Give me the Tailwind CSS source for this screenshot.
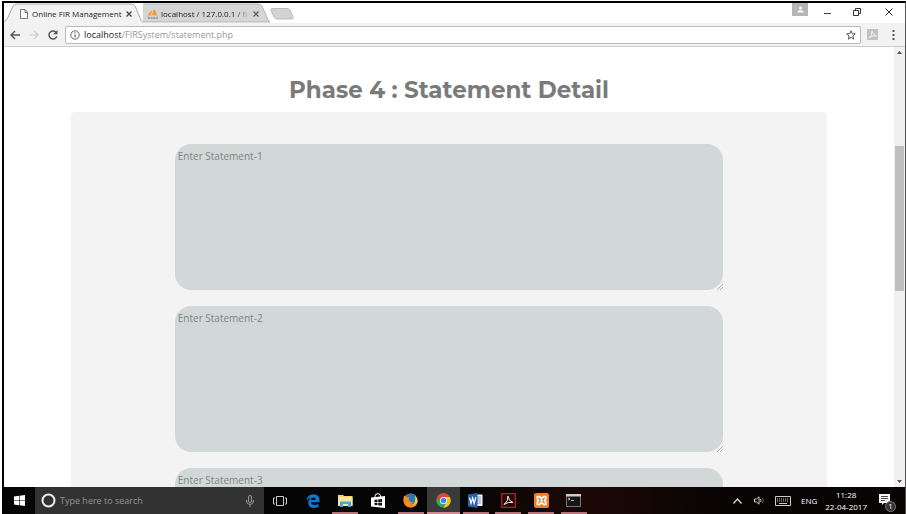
<!DOCTYPE html>
<html lang="en">
<head>
<meta charset="utf-8">
<title>Online FIR Management</title>
<script src="https://cdn.jsdelivr.net/npm/@tailwindcss/browser@4"></script>
</head>
<body class="bg-white font-['Open_Sans','Noto_Sans',sans-serif]">
<div class="flex h-screen flex-col overflow-hidden pl-0.5 pt-px">
<div class="flex min-h-0 flex-1 flex-col border-t-2 border-r border-l-2 border-t-black border-l-black border-r-[#555]">

  <header class="bg-[#f2f2f2]">
    <div class="flex h-5 items-start bg-white">
      <nav class="flex h-5 text-[8px] text-[#222]" aria-label="Tabs">
        <div class="relative flex h-5 w-[139px] items-center pt-0.5 pl-4">
          <svg class="absolute inset-0 h-5 w-[139px]" viewBox="0 0 139 20"><path d="M0 20V17Q3 17 5 12L9 3Q10 1 13 1H127Q130 1 131 3L137 17Q138 20 139 20Z" fill="#f2f2f2"/><path d="M0 19Q3 18 5 12L9 3Q10 1 13 1H127Q130 1 131 3L137 17Q138 19 139 19" fill="none" stroke="#aaa"/></svg>
          <svg class="relative h-[10px] w-2 shrink-0" viewBox="0 0 8 10" fill="#fff" stroke="#777"><path d="M.5.5H5L7.500 3V9.500H.5ZM5 .5V3.500H7.500"/></svg>
          <a href="#" class="relative ml-1 w-[94px] whitespace-nowrap">Online FIR Management</a>
          <button class="relative" aria-label="Close tab"><svg class="h-[6px] w-[6px]" viewBox="0 0 6 6" stroke="#444" stroke-width="1.3"><path d="M.5.5l5 5m0-5l-5 5"/></svg></button>
        </div>
        <div class="relative flex h-5 w-[127px] items-center pt-0.5 pl-1">
          <svg class="absolute inset-0 h-5 w-[127px]" viewBox="0 0 127 20"><path d="M-6 1H115Q118 1 119 3L125 17Q126 19 127 19H0L-5 4Z" fill="#d5d5d5" stroke="#b5b5b5"/></svg>
          <svg class="relative h-[10px] w-3 shrink-0" viewBox="0 0 12 10"><path d="M5 6Q6 2 7 0Q9 2 10 6ZM1 6Q3 2 5 2L4 6Z" fill="#f29a38"/><path d="M0 7Q6 5 11 7" stroke="#f4b16b" fill="none"/><path d="M1 9H11" stroke="#8a8a9b" stroke-width="1.4" stroke-dasharray="2 .6"/></svg>
          <a href="#" class="relative ml-0.5 block w-[88px] whitespace-nowrap [mask-image:linear-gradient(to_right,black_85%,transparent)]">localhost / 127.0.0.1 / fir</a>
          <button class="relative ml-1" aria-label="Close tab"><svg class="h-[6px] w-[6px]" viewBox="0 0 6 6" stroke="#555" stroke-width="1.2"><path d="M.5.5l5 5m0-5l-5 5"/></svg></button>
        </div>
        <button aria-label="New tab"><svg class="h-5 w-[26px]" viewBox="0 0 26 20"><path d="M1.500 5.500H17Q19 5.500 20 7L23 14Q23.500 16 22 16H7Q5 16 4 14L1 7.500Q.5 5.500 1.500 5.500Z" fill="#d3d3d3" stroke="#bcbcbc"/></svg></button>
      </nav>
      <div class="ml-auto flex h-[18px] items-center">
        <button class="flex h-[13px] w-4 items-center justify-center self-start bg-[#b5b5b5]" aria-label="Profile"><svg class="h-[7px] w-[7px]" viewBox="0 0 7 7" fill="#fff"><circle cx="3.500" cy="2" r="1.500"/><path d="M.5 6.500V5.500Q3.500 3 6.500 5.500V6.500Z"/></svg></button>
        <button class="ml-4" aria-label="Minimize"><svg class="h-2 w-[7px]" viewBox="0 0 7 8"><path d="M0 5.500H7" stroke="#444"/></svg></button>
        <button class="ml-[22px]" aria-label="Restore"><svg class="h-2 w-2" viewBox="0 0 8 8" fill="none" stroke="#333"><path d="M.5 2.500H5.500V7.500H.5ZM2.500 2V.5H7.500V5.500H6"/></svg></button>
        <button class="ml-6 mr-3" aria-label="Close window"><svg class="h-2 w-2" viewBox="0 0 8 8" stroke="#333"><path d="M.5.5l7 7m0-7l-7 7"/></svg></button>
      </div>
    </div>
    <div class="flex h-6 items-center border-b border-[#ccc] pl-[6px] pr-[10px]">
      <button aria-label="Back"><svg class="h-[10px] w-[10px]" viewBox="0 0 10 10" fill="none" stroke="#555" stroke-width="1.4"><path d="M10 5H1M5 1L1 5L5 9"/></svg></button>
      <button class="ml-[9px]" aria-label="Forward"><svg class="h-[10px] w-[10px]" viewBox="0 0 10 10" fill="none" stroke="#ccc" stroke-width="1.200"><path d="M0 5H9M5 1L9 5L5 9"/></svg></button>
      <button class="ml-[9px]" aria-label="Reload"><svg class="h-[10px] w-[10px]" viewBox="0 0 10 10"><path d="M8.200 2.500A4 4 0 1 0 8.800 6.300" fill="none" stroke="#555" stroke-width="1.500"/><path d="M9.500 0V4.300H5.200Z" fill="#555"/></svg></button>
      <div class="ml-[7px] flex h-[18px] flex-1 items-center rounded-xs border border-[#bbb] bg-white pl-1 pr-1">
        <svg class="h-[10px] w-[10px]" viewBox="0 0 10 10" fill="none" stroke="#666"><circle cx="5" cy="5" r="4.200"/><path d="M5 4.300V7.500M5 2.300V3.300" stroke-width="1.200"/></svg>
        <div class="relative ml-1 h-4 flex-1 text-[9px] leading-4">
          <input id="url" aria-label="Address" class="absolute inset-0 w-full bg-transparent text-transparent outline-none" value="">
          <label for="url" class="pointer-events-none relative block text-[#999]"><span class="text-[#222]">localhost</span>/FIRSystem/statement.php</label>
        </div>
        <button aria-label="Bookmark"><svg class="h-[10px] w-[10px]" viewBox="0 0 10 10" fill="none" stroke="#555"><path d="M5 .8L6.200 3.700L9.300 3.900L6.900 6L7.700 9.100L5 7.400L2.300 9.100L3.100 6L.7 3.900L3.800 3.700Z"/></svg></button>
      </div>
      <button class="ml-[6px]" aria-label="PDF extension"><svg class="h-[11px] w-[11px]" viewBox="0 0 11 11"><path d="M0 0H11V11H0Z" fill="#c2c2c2"/><path d="M2 9Q5 7 5 2Q6 6 9.500 7Q5 6 2 9Z" fill="none" stroke="#f5f5f5"/></svg></button>
      <button class="ml-[14px]" aria-label="Menu"><svg class="h-[10px] w-[3px]" viewBox="0 0 3 10" fill="#555"><path d="M.5 0h2v2h-2zM.5 4h2v2h-2zM.5 8h2v2h-2z"/></svg></button>
    </div>
  </header>

  <div class="flex min-h-0 flex-1">
    <main class="min-w-0 flex-1 overflow-hidden bg-white pt-6">
      <h1 class="mb-[3px] text-center font-['Montserrat','Inter',sans-serif] text-[23px] leading-[38px] font-bold text-[#7a7a7a]">Phase 4 : Statement Detail</h1>
      <form class="mx-auto flex w-[85%] flex-col items-center gap-4 rounded-t-sm bg-[#f3f3f3] pt-8">
        <div class="relative w-[72.5%]">
          <textarea aria-label="Statement 1" placeholder="Enter Statement-1" class="block h-[146px] w-full resize-none rounded-2xl bg-[#d2d8d7] px-[3px] py-1 text-[10px] leading-4 placeholder:text-[#808484]"></textarea>
          <svg class="absolute right-0 bottom-0 h-[6px] w-[6px]" viewBox="0 0 6 6" stroke="#999" stroke-width=".8"><path d="M0 6L6 0M3 6L6 3"/></svg>
        </div>
        <div class="relative w-[72.5%]">
          <textarea aria-label="Statement 2" placeholder="Enter Statement-2" class="block h-[146px] w-full resize-none rounded-2xl bg-[#d2d8d7] px-[3px] py-1 text-[10px] leading-4 placeholder:text-[#808484]"></textarea>
          <svg class="absolute right-0 bottom-0 h-[6px] w-[6px]" viewBox="0 0 6 6" stroke="#999" stroke-width=".8"><path d="M0 6L6 0M3 6L6 3"/></svg>
        </div>
        <div class="relative w-[72.5%]">
          <textarea aria-label="Statement 3" placeholder="Enter Statement-3" class="block h-[146px] w-full resize-none rounded-2xl bg-[#d2d8d7] px-[3px] py-1 text-[10px] leading-4 placeholder:text-[#808484]"></textarea>
        </div>
      </form>
    </main>
    <div class="flex w-[11px] flex-col items-center bg-[#f0f0f0] py-1" aria-hidden="true">
      <svg class="h-[3px] w-[5px]" viewBox="0 0 5 3" fill="#555"><path d="M0 3L2.500 0L5 3Z"/></svg>
      <div class="grow-91"></div>
      <div class="w-[9px] grow-144 bg-[#bfbfbf]"></div>
      <div class="grow-188"></div>
      <svg class="h-[3px] w-[5px]" viewBox="0 0 5 3" fill="#555"><path d="M0 0L2.500 3L5 0Z"/></svg>
    </div>
  </div>

  <footer class="flex h-[27px] items-stretch bg-linear-to-r from-[#050505] from-50% via-[#1c0805] via-65% to-[#080404] to-80%">
    <button class="flex w-[31px] items-center justify-center" aria-label="Start"><svg class="h-[11px] w-[11px]" viewBox="0 0 11 11" fill="#fff"><path d="M0 1.500L5 .8V5.200H0ZM5.600.7L11 0V5.200H5.600ZM0 5.800H5V10.200L0 9.500ZM5.600 5.800H11V11L5.600 10.300Z"/></svg></button>
    <div class="flex w-[229px] items-center bg-[#323232] pl-[6px] pr-[10px]">
      <svg class="h-[15px] w-[15px] shrink-0" viewBox="0 0 15 15" fill="none" stroke="#eee" stroke-width="2"><circle cx="7.500" cy="7.500" r="6"/></svg>
      <input aria-label="Search" placeholder="Type here to search" class="ml-1 min-w-0 flex-1 bg-transparent text-[9px] leading-4 outline-none placeholder:text-[#929292]">
      <button aria-label="Voice search"><svg class="h-3 w-2" viewBox="0 0 8 12" fill="none" stroke="#999"><rect x="2.500" y=".5" width="3" height="7" rx="1.500"/><path d="M.7 5V7Q1 9.300 4 9.300Q7 9.300 7.300 7V5M4 9.500V12"/></svg></button>
    </div>
    <div class="grid w-[326px] grid-cols-10">
      <button class="flex items-center justify-center" aria-label="Task view"><svg class="h-[10px] w-[14px]" viewBox="0 0 14 10" fill="none" stroke="#ccc"><path d="M3.500.5H10.500V9.500H3.500ZM2 2H.5V8H2M12 2H13.500V8H12"/></svg></button>
      <button class="flex items-center justify-center" aria-label="Edge"><svg class="h-[14px] w-[14px]" viewBox="0 0 14 14"><path d="M.5 6.500Q1.500.3 7.500.3Q13.500.5 13.500 6.500V8.300H5Q5.300 11 8.700 11.100Q10.700 11.100 12.500 10V13Q10.500 14 8 14Q2.200 13.800 2.200 8.700Q2.200 5.300 5.500 3.800Q2.700 4 .5 6.500ZM5 6H9.700Q9.700 3.600 7.600 3.600Q5.500 3.600 5 6Z" fill="#0a78d4"/></svg></button>
      <button class="relative flex items-center justify-center" aria-label="File Explorer"><svg class="h-[13px] w-[15px]" viewBox="0 0 15 13"><path d="M0 1H5L6 2H14.500V12H0Z" fill="#f5d57a"/><path d="M0 3H14.500V12H0Z" fill="#fce69a"/><path d="M2 13V7.500H13V13H10V10H5V13Z" fill="#41a9dc"/></svg><span class="absolute bottom-0 h-0.5 w-[26px] bg-[#b9747b]"></span></button>
      <button class="flex items-center justify-center" aria-label="Store"><svg class="h-[15px] w-[14px]" viewBox="0 0 14 15"><path d="M0 4.500L14 3V15L0 13.500Z" fill="#fff"/><path d="M4 5V3Q4 .7 7 .7Q9.500.7 9.500 3V4.500" fill="none" stroke="#fff"/><path d="M3.500 6.800L6.500 6.500V9H3.500ZM7.200 6.400L11 6V9H7.200ZM3.500 9.700H6.500V12.200L3.500 12ZM7.200 9.700H11V12.700L7.200 12.300Z" fill="#111"/></svg></button>
      <button class="relative flex items-center justify-center" aria-label="Firefox"><svg class="h-[15px] w-[15px]" viewBox="0 0 15 15"><circle cx="7.500" cy="7.500" r="7" fill="#e66000"/><circle cx="8.300" cy="5.800" r="5.300" fill="#217bb8"/><path d="M1 3Q2.500 3 4 4.200L6.500 4.500L5.500 6.500L7 8.500Q9 9.500 10.500 8.500Q9.500 11 7 11Q11 12.500 12.600 7Q13 5 12 2.500Q15.300 5.500 14.500 9.200Q13 14.500 7.500 14.500Q1.500 14.200.6 8.500Q.3 5 1 3Z" fill="#f28c1c"/><path d="M12 2.500Q15.300 6 13.800 9.800Q12.500 12 10 12.500Q13.300 9 12 2.500Z" fill="#ffcf3f"/></svg><span class="absolute bottom-0 h-0.5 w-[26px] bg-[#b9747b]"></span></button>
      <button class="relative flex items-center justify-center bg-[#3a3a3a]" aria-label="Chrome"><svg class="h-[15px] w-[15px]" viewBox="0 0 15 15"><circle cx="7.500" cy="7.500" r="7.200" fill="#34a853"/><path d="M1.300 3.900A7.200 7.200 0 0 1 13.700 3.900H7.500L4.400 9.300Z" fill="#e94235"/><path d="M13.700 3.900A7.200 7.200 0 0 1 7.500 14.700L10.600 9.300L7.500 3.900Z" fill="#fbc116"/><circle cx="7.500" cy="7.500" r="3.600" fill="#fff"/><circle cx="7.500" cy="7.500" r="2.800" fill="#4285f4"/></svg><span class="absolute bottom-0 h-0.5 w-full bg-[#d58a91]"></span></button>
      <button class="relative flex items-center justify-center" aria-label="Word"><svg class="h-[15px] w-[15px]" viewBox="0 0 15 15"><path d="M6 1.500H14.500V13H6Z" fill="#f4f7fc"/><path d="M9 4H13M9 6H13M9 8H13M9 10H13" stroke="#7897cb"/><path d="M0 1.500L9.500 0V15L0 13.500Z" fill="#2b5fb0"/><path d="M1.500 4.500L3 10.500L4.700 5L6.200 10.500L7.900 4.200" fill="none" stroke="#fff" stroke-width="1.200"/></svg><span class="absolute bottom-0 h-0.5 w-[26px] bg-[#b9747b]"></span></button>
      <button class="relative flex items-center justify-center" aria-label="Adobe Reader"><svg class="h-[15px] w-[15px]" viewBox="0 0 15 15"><path d="M.7.7H14.300V14.300H.7Z" fill="#2b0707" stroke="#b3211b" stroke-width="1.300"/><path d="M3 11.500Q7.500 8 7 3Q7.500 8 12 9.500Q7 8.500 3 11.500Z" fill="none" stroke="#eee"/></svg><span class="absolute bottom-0 h-0.5 w-[26px] bg-[#b9747b]"></span></button>
      <button class="relative flex items-center justify-center" aria-label="XAMPP"><svg class="h-[15px] w-[15px]" viewBox="0 0 15 15"><rect width="15" height="15" rx="2" fill="#f37b25"/><path d="M3.300 3.500H5.200L7.500 5.500L9.800 3.500H11.700V6L10.500 7.500L11.700 9V11.500H9.800L7.500 9.500L5.200 11.500H3.300V9L4.500 7.500L3.300 6Z" fill="none" stroke="#fff" stroke-width="1.700" stroke-linejoin="round"/><path d="M6 7.500H9" stroke="#fff" stroke-width="1.500"/></svg><span class="absolute bottom-0 h-0.5 w-[26px] bg-[#b9747b]"></span></button>
      <button class="relative flex items-center justify-center" aria-label="Command prompt"><svg class="h-[13px] w-[15px]" viewBox="0 0 15 13"><path d="M.5.5H14.500V12.500H.5Z" fill="#151515" stroke="#777"/><path d="M0 0H15V2.500H0Z" fill="#ccc"/><path d="M2 4L4 5L2 6M5 6.500H8" fill="none" stroke="#ddd" stroke-width=".8"/></svg><span class="absolute bottom-0 h-0.5 w-[26px] bg-[#b9747b]"></span></button>
    </div>
    <div class="ml-auto flex items-center text-[8px] leading-3 text-white">
      <button aria-label="Show hidden icons"><svg class="h-[6px] w-[9px]" viewBox="0 0 9 6" fill="none" stroke="#ddd" stroke-width="1.200"><path d="M.5 5.500L4.500 1L8.500 5.500"/></svg></button>
      <button class="ml-3" aria-label="Volume"><svg class="h-[9px] w-[11px]" viewBox="0 0 11 9" fill="none" stroke="#ccc"><path d="M.5 3H2.500L5 .8V8.200L2.500 6H.5ZM6.500 3Q7.500 4.500 6.500 6"/><path d="M8.500 2Q10 4.500 8.500 7" stroke="#666"/></svg></button>
      <button class="ml-[10px]" aria-label="Touch keyboard"><svg class="h-[10px] w-4" viewBox="0 0 16 10" fill="none" stroke="#ccc"><path d="M.5.5H15.500V9.500H.5Z"/><path d="M2 3H14M2 5H14" stroke-dasharray="1 1"/><path d="M4 7.500H12"/></svg></button>
      <button class="ml-[10px]">ENG</button>
      <div class="ml-2 text-center">11:28<br>22-04-2017</div>
      <button class="relative ml-3 mr-[11px]" aria-label="Notifications, 1 new"><svg class="h-[14px] w-[15px]" viewBox="0 0 15 14"><path d="M0 0H11V9H5L3 11V9H0Z" fill="#f5f5f5"/><path d="M2 2.500H9M2 4.500H9M2 6.500H6" stroke="#222" stroke-width=".8"/></svg><span class="absolute -right-0.5 -bottom-1 flex h-[11px] w-[11px] items-center justify-center rounded-full border border-[#777] bg-[#333] text-[8px] leading-none text-white">1</span></button>
    </div>
  </footer>
</div>
</div>
</body>
</html>
